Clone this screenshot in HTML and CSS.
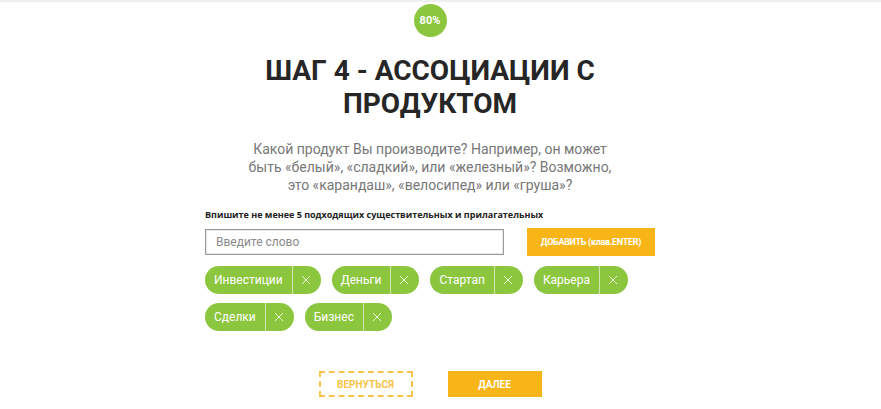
FILE: index.html
```html
<!DOCTYPE html>
<html lang="ru">
<head>
<meta charset="utf-8">
<title>Шаг 4</title>
<link rel="stylesheet" href="styles.css">
</head>
<body>
<div class="page">
  <div class="badge">80%</div>
  <h1 class="title">ШАГ 4 - АССОЦИАЦИИ С ПРОДУКТОМ</h1>
  <p class="lead">Какой продукт Вы производите? Например, он может быть «белый», «сладкий», или «железный»? Возможно, это «карандаш», «велосипед» или «груша»?</p>
  <div class="form">
    <div class="label">Впишите не менее 5 подходящих существительных и прилагательных</div>
    <div class="input-row">
      <input class="input" type="text" placeholder="Введите слово">
      <button class="add-btn">ДОБАВИТЬ (клав.ENTER)</button>
    </div>
    <div class="tags">
      <span class="tag"><span class="tag-text">Инвестиции</span><span class="tag-x"><svg viewBox="0 0 10 10" width="10" height="10"><path d="M1 1L9 9M9 1L1 9" stroke="#e4f2cf" stroke-width="1"/></svg></span></span>
      <span class="tag"><span class="tag-text">Деньги</span><span class="tag-x"><svg viewBox="0 0 10 10" width="10" height="10"><path d="M1 1L9 9M9 1L1 9" stroke="#e4f2cf" stroke-width="1"/></svg></span></span>
      <span class="tag"><span class="tag-text">Стартап</span><span class="tag-x"><svg viewBox="0 0 10 10" width="10" height="10"><path d="M1 1L9 9M9 1L1 9" stroke="#e4f2cf" stroke-width="1"/></svg></span></span>
      <span class="tag"><span class="tag-text">Карьера</span><span class="tag-x"><svg viewBox="0 0 10 10" width="10" height="10"><path d="M1 1L9 9M9 1L1 9" stroke="#e4f2cf" stroke-width="1"/></svg></span></span>
      <span class="tag"><span class="tag-text">Сделки</span><span class="tag-x"><svg viewBox="0 0 10 10" width="10" height="10"><path d="M1 1L9 9M9 1L1 9" stroke="#e4f2cf" stroke-width="1"/></svg></span></span>
      <span class="tag"><span class="tag-text">Бизнес</span><span class="tag-x"><svg viewBox="0 0 10 10" width="10" height="10"><path d="M1 1L9 9M9 1L1 9" stroke="#e4f2cf" stroke-width="1"/></svg></span></span>
    </div>
  </div>
  <div class="nav">
    <button class="btn-back">ВЕРНУТЬСЯ</button>
    <button class="btn-next">ДАЛЕЕ</button>
  </div>
</div>
</body>
</html>
```

FILE: styles.css
```css
* { box-sizing: border-box; }
html, body { margin: 0; padding: 0; background: #fff; }
body {
  font-family: Roboto, "Liberation Sans", sans-serif;
  border-top: 2px solid #efefef;
}
.page {
  width: 860px;
  display: flex;
  flex-direction: column;
  align-items: center;
  padding-top: 2px;
}
.badge {
  width: 33px;
  height: 33px;
  border-radius: 50%;
  background: #8cc63f;
  color: #fff;
  font-size: 11px;
  font-weight: 700;
  display: flex;
  align-items: center;
  justify-content: center;
}
.title {
  margin: 17px 0 0;
  width: 420px;
  text-align: center;
  font-size: 28px;
  line-height: 33px;
  font-weight: 700;
  color: #262626;
}
.lead {
  margin: 20px 0 0;
  width: 380px;
  text-align: center;
  font-size: 14px;
  line-height: 18px;
  color: #777;
}
.form {
  width: 450px;
  margin-top: 14px;
}
.label {
  font-family: "Open Sans", sans-serif;
  font-weight: 700;
  font-size: 9px;
  line-height: 14px;
  color: #222;
}
.input-row {
  display: flex;
  align-items: center;
  justify-content: space-between;
  margin-top: 6px;
}
.input {
  width: 299px;
  height: 26px;
  border: 1px solid #9a9a9a;
  box-shadow: inset 0 0 0 1px #e6e6e6;
  padding: 0 10px;
  font-family: Roboto, sans-serif;
  font-size: 12px;
  color: #333;
  outline: none;
}
.input::placeholder { color: #8a8a8a; }
.add-btn {
  width: 128px;
  height: 28px;
  border: none;
  background: #f8b517;
  color: #fff;
  font-family: Roboto, sans-serif;
  font-weight: 700;
  font-size: 9px;
  letter-spacing: -0.3px;
  padding: 0;
}
.tags {
  display: flex;
  flex-wrap: wrap;
  gap: 9px 11px;
  margin-top: 10px;
}
.tag {
  display: inline-flex;
  align-items: stretch;
  height: 28px;
  border-radius: 14px;
  background: #8cc63f;
  color: #fff;
  font-size: 12px;
}
.tag-text {
  display: flex;
  align-items: center;
  padding: 0 9px 0 9px;
  border-right: 1px solid #d2e8b2;
}
.tag-x {
  width: 28px;
  display: flex;
  align-items: center;
  justify-content: center;
  padding-right: 2px;
}
.nav {
  display: flex;
  gap: 35px;
  margin-top: 40px;
}
.btn-back, .btn-next {
  width: 94px;
  height: 26px;
  font-family: Roboto, sans-serif;
  font-weight: 700;
  font-size: 10px;
  padding: 0;
}
.btn-back {
  background: #fff;
  border: 2px dashed #f8c34a;
  color: #f8c34a;
}
.btn-next {
  background: #f8b517;
  border: none;
  color: #fff;
}
```
